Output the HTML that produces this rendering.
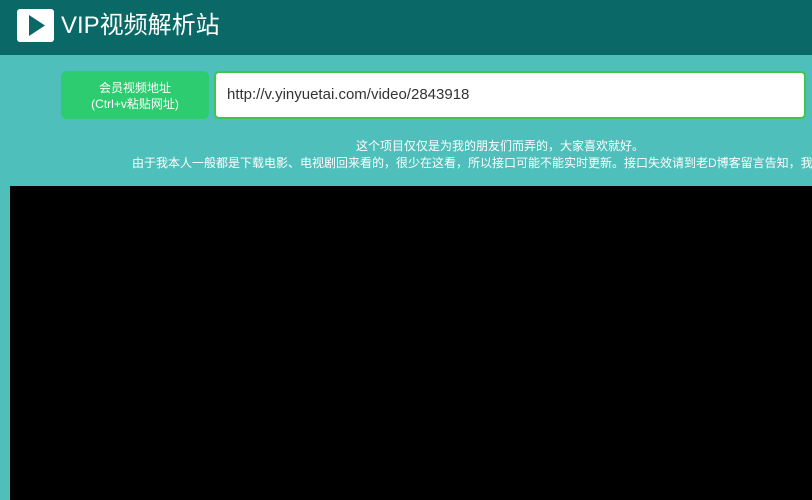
<!DOCTYPE html>
<html><head><meta charset="utf-8"><style>
html,body{margin:0;padding:0;width:812px;height:500px;overflow:hidden;background:#4fbfbb;font-family:"Liberation Sans","Noto Sans CJK SC",sans-serif;position:relative;}
.hd{position:absolute;left:0;top:0;width:812px;height:55px;background:#0a6966;}
.logo{position:absolute;left:17px;top:9px;width:37px;height:33px;background:#fff;border-radius:3px;}
.title{position:absolute;left:61px;top:11px;color:#fff;font-size:24px;line-height:30px;}
.btn{position:absolute;left:61px;top:71px;width:148px;height:48px;background:#2ecc71;border-radius:6px;color:#fff;font-size:12px;line-height:16px;text-align:center;box-sizing:border-box;padding-top:9px;}
.inp{position:absolute;left:214px;top:71px;width:592px;height:48px;box-sizing:border-box;border:2px solid #3fc74a;border-radius:5px;background:#fff;color:#333;font-size:15px;line-height:44px;padding-left:11px;}
.t1{position:absolute;left:356px;top:138px;color:#fff;font-size:12px;line-height:16px;white-space:nowrap;}
.t2{position:absolute;left:132px;top:155px;width:680px;overflow:hidden;color:#fff;font-size:12px;line-height:16px;white-space:nowrap;}
.vid{position:absolute;left:10px;top:186px;width:802px;height:314px;background:#000;}
</style></head><body>
<div class="hd">
<div class="logo"><svg width="37" height="33"><polygon points="12,6 12,27 28,16.5" fill="#0a6966"/></svg></div>
<div class="title">VIP视频解析站</div>
</div>
<div class="btn">会员视频地址<br>(Ctrl+v粘贴网址)</div>
<div class="inp">http://v.yinyuetai.com/video/2843918</div>
<div class="t1">这个项目仅仅是为我的朋友们而弄的，大家喜欢就好。</div>
<div class="t2">由于我本人一般都是下载电影、电视剧回来看的，很少在这看，所以接口可能不能实时更新。接口失效请到老D博客留言告知，我将尽快更新。</div>
<div class="vid"></div>
</body></html>
